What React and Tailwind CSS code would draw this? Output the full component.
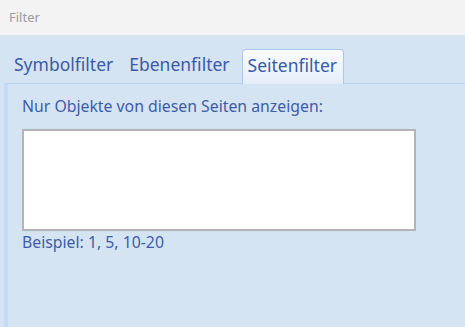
import React from 'react'

const tabs = ['Symbolfilter', 'Ebenenfilter', 'Seitenfilter']

const App = () => {
  const active = 2

  return (
    <div className="w-[465px] h-[327px] overflow-hidden flex flex-col bg-[#d5e4f3] font-['Noto_Sans',sans-serif]">
      {/* Title bar */}
      <div className="h-[35px] bg-[#f3f3f3] flex items-center px-[9px] text-[13px] text-[#9a9a9a]">
        Filter
      </div>

      {/* Tabs */}
      <div className="flex items-end gap-[4px] pl-[8px] pt-[14px] h-[48px]">
        {tabs.map((t, i) =>
          i === active ? (
            <div
              key={t}
              className="h-[35px] pl-[5px] pr-[6px] pb-[3px] -mb-px ml-[2px] flex items-center rounded-t-[4px] border border-b-0 border-[#a9c8ec] bg-gradient-to-b from-[#fafcff] to-[#e4eefa] text-[17.5px] text-[#3b5aa6] relative z-10"
            >
              {t}
            </div>
          ) : (
            <div key={t} className="h-[34px] px-[6px] pb-[3px] flex items-center text-[17.5px] text-[#3b5aa6]">
              {t}
            </div>
          )
        )}
      </div>

      {/* Panel */}
      <div className="flex-1 ml-[4px] border-t border-[#b9d3f1] border-l-[4px] border-l-[#c3dbf8] pl-[14px] pt-[11px]">
        <div className="text-[15.8px] text-[#3d5ca8] leading-[22px]">Nur Objekte von diesen Seiten anzeigen:</div>
        <div className="mt-[12px] w-[394px] h-[102px] bg-white border-2 border-[#b4b4b8]" />
        <div className="text-[15.8px] text-[#3d5ca8] leading-[22px]">Beispiel: 1, 5, 10-20</div>
      </div>
    </div>
  )
}

export default App
